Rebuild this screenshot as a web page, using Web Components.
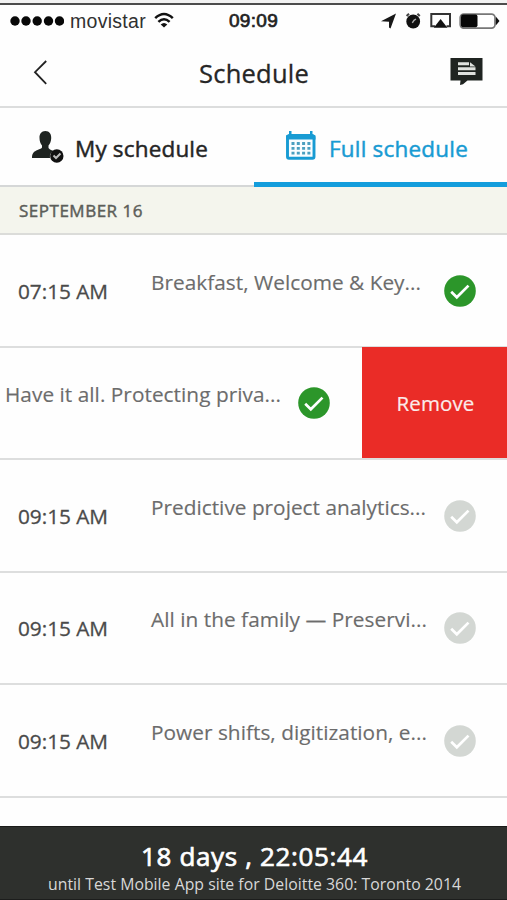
<!DOCTYPE html>
<html lang="en">
<head>
<meta charset="utf-8">
<title>Schedule</title>
<style>
html,body{margin:0;padding:0;background:#fefefe}
body{width:507px;height:900px;overflow:hidden;font-family:"Open Sans","Noto Sans",sans-serif}
</style>
</head>
<body>
<schedule-app></schedule-app>
<script>
function define(name, html, setup) {
  customElements.define(name, class extends HTMLElement {
    connectedCallback() {
      if (this.shadowRoot) return;
      const root = this.attachShadow({ mode: 'open' });
      root.innerHTML = html;
      if (setup) setup(this, root);
    }
  });
}

/* Single-line label whose tracking spreads the text over its "w" pixels. */
define('ui-label', `<style>:host{display:block;white-space:nowrap;flex:none}span{display:inline-block}</style><span><slot></slot></span>`,
  host => { host.style.width = host.getAttribute('w') + 'px'; });

define('status-bar', `<style>
:host{display:flex;box-sizing:border-box;height:38px;border-top:3px solid #f2f2f2;align-items:flex-start;position:relative;font-family:"Liberation Sans",Arial,sans-serif;color:#111}
.rule{position:absolute;left:0;right:0;top:0;height:2px;background:#4c4c4c}
.l{width:229px;display:flex;padding:6px 0 0 10px;box-sizing:border-box}
.l ui-label{font-size:19.5px;line-height:24px;margin-left:6px;color:#303030}
.t{font-size:19px;line-height:24px;-webkit-text-stroke:.7px #222;padding-top:6px;color:#222}
svg{display:block;flex:none}
.r{position:absolute;right:0;top:6px}
</style>
<div class="rule"></div>
<div class="l"><svg width="54" height="24"><g fill="#080808"><circle cx="5" cy="12" r="4.7"/><circle cx="16" cy="12" r="4.7"/><circle cx="27.2" cy="12" r="4.7"/><circle cx="38.5" cy="12" r="4.7"/><circle cx="49.5" cy="12" r="4.7"/></g></svg>
<ui-label w="76">movistar</ui-label>
<svg width="20" height="24" style="margin-left:8px" fill="none" stroke="#111" stroke-width="2.5"><path d="M1.2 9.2Q10 .9 18.8 9.2"/><path d="M4.4 12.9Q10 7.5 15.600 12.9"/><path d="M6.700 15.500Q10 12.500 13.300 15.500L10 18.500Z" fill="#111" stroke="none"/></svg></div>
<ui-label class="t" w="49">09:09</ui-label>
<svg class="r" width="127" height="24">
<path d="M1 12.200L16 4.500L10.500 19.500L9 18.500V12.800Z" fill="#181818"/>
<circle cx="33.200" cy="12.500" r="6.900" fill="#111"/><path d="M26.600 7L29 4.700M39.800 7L37.400 4.700" stroke="#444" stroke-width="2"/><path d="M32.300 13.800L34 11.300L36 10" stroke="#aaa" fill="none" stroke-width="1.400"/>
<path d="M55 17.200H51.300V5H70V17.200H66.500" fill="none" stroke="#333" stroke-width="2"/><path d="M53.800 18.800L60.600 10L67.400 18.800Z" fill="#111"/>
<rect x="80.200" y="5.100" width="34.800" height="14" rx="3.500" fill="#fff" stroke="#777" stroke-width="1.700"/><rect x="81" y="5.600" width="16.500" height="12.600" rx="2" fill="#080808"/><path d="M115.800 7.500L119.500 11.900L115.800 16.400Z" fill="#111"/>
</svg>`);

define('nav-bar', `<style>
:host{display:flex;box-sizing:border-box;height:70px;border-bottom:2px solid #dcdddd;color:#262626}
svg{display:block;flex:none}
.b{margin:22px 0 0 33px}.m{margin:19px 0 0 141px}
ui-label{margin:17px 0 0 151px;font-size:25.500px;line-height:36px;-webkit-text-stroke:.3px #262626}
</style>
<svg class="b" width="15" height="26" fill="none" stroke="#222" stroke-width="1.800"><path d="M13.200 1L2 12.200L13.200 23.800"/></svg>
<ui-label w="110"></ui-label>
<svg class="m" width="34" height="30"><path d="M.5 1H32.500V23.500H17.500L13 27.300L10 28L10.500 23.500H.5Z" fill="#1f2421"/><path d="M8 6.800H19M8 11.800H25.500M8 16.500H25.500" stroke="#dfe2df" stroke-width="3"/><path d="M20 5.300L25.500 9.500H20Z" fill="#dfe2df"/></svg>`,
(host, root) => { root.querySelector('ui-label').textContent = host.getAttribute('heading'); });

define('schedule-tab', `<style>
:host{display:flex;box-sizing:border-box;height:79px;border-bottom:2px solid #d5d7d7;color:#252525}
:host([active]){color:#189bd3;border-bottom:5px solid #139ddc}
.i{width:32px;height:32px;margin:23px 11px 0 32px}
.t{font-size:22.500px;line-height:32px;margin-top:25px;-webkit-text-stroke:.45px currentColor}
</style><div class="i"><slot name="icon"></slot></div><div class="t"><slot></slot></div>`);

define('day-heading', `<style>:host{display:block;box-sizing:border-box;height:48px;border-bottom:2px solid #dbdcd9;background:#f4f5ed;color:#5c5e59;padding:12px 0 0 19px;font-size:17px;line-height:24px;-webkit-text-stroke:.45px #5c5e59}</style><slot></slot>`);

define('check-badge', `<style>:host{display:block;width:32px;height:32px;color:#d3d7d3}:host([on]){color:#2c962a}svg{display:block}</style>
<svg width="32" height="32"><circle cx="16" cy="16" r="15.800" fill="currentColor"/><path d="M7.200 16.800L12.800 22.300L24.500 10.600" fill="none" stroke="#fff" stroke-width="2.700"/></svg>`);

define('schedule-row', `<style>
:host{display:flex;box-sizing:border-box;height:112.600px;border-bottom:2px solid #dddede}
.time{width:151px;padding:41.500px 0 0 18px;box-sizing:border-box;font-size:20.800px;line-height:28px;color:#4a4a4a;-webkit-text-stroke:.3px #4a4a4a;flex:none}
.title{width:293px;padding-top:32.500px;font-size:20.800px;line-height:28px;color:#6c6c6c;-webkit-text-stroke:.15px #6c6c6c;flex:none}
check-badge{margin-top:39.500px;flex:none}
:host([swiped]) .time{display:none}
:host([swiped]) .title{padding-left:5px;width:298px;box-sizing:border-box;flex:none}
.remove{display:none}
:host([swiped]) .remove{display:block;margin:-1px 0 0 31.500px;flex:1;background:#ea2c27;color:#fbeceb;padding:42px 0 0 35px;font-size:20.500px;line-height:28px;-webkit-text-stroke:.2px #fbeceb;box-sizing:border-box}
</style><div class="time"></div><div class="title"><slot></slot></div><check-badge></check-badge><div class="remove"></div>`,
(host, root) => {
  if (host.hasAttribute('time')) root.querySelector('.time').innerHTML = `<ui-label w="90">${host.getAttribute('time')}</ui-label>`;
  if (host.hasAttribute('swiped')) root.querySelector('.remove').innerHTML = '<ui-label w="78">Remove</ui-label>';
  if (host.hasAttribute('on')) root.querySelector('check-badge').setAttribute('on', '');
});

define('countdown-bar', `<style>
:host{display:flex;flex-direction:column;align-items:flex-start;box-sizing:border-box;height:74px;background:#2e302d;border-top:1px solid #1a1b19;border-bottom:1px solid #1c1d1c;color:#fff}
.a{font-size:26px;line-height:34px;-webkit-text-stroke:.7px #fff;margin:12px 0 0 141px}
.b{font-size:15.800px;line-height:22px;color:#d8d8d8;margin:0 0 0 48px}
</style><ui-label class="a" w="227">18 days , 22:05:44</ui-label><ui-label class="b" w="413">until Test Mobile App site for Deloitte 360: Toronto 2014</ui-label>`);

define('schedule-app', `<style>
:host{display:flex;flex-direction:column;width:507px;height:900px;overflow:hidden;background:#fefefe}
:host>*{flex:none}
.tabs{display:grid;grid-template-columns:254px 253px}
.list{height:591px;overflow:hidden}
svg{display:block}
</style>
<status-bar></status-bar>
<nav-bar heading="Schedule"></nav-bar>
<div class="tabs">
<schedule-tab><svg slot="icon" width="32" height="32"><path d="M13.300 0C17.500 0 19.600 3.500 19.200 7.500C19 11 17.800 13 16.500 14.500V17C18 19 20 19 21.500 20C18.500 21.500 17.500 24 18 27H0C0 22 2 20.500 5.500 19C8 18 9.500 17.500 10 16.500V14.500C8.500 12.500 7.500 10 7.500 7C7.300 3 9.500 0 13.300 0Z" fill="#1e2320"/><circle cx="24.800" cy="25" r="6.700" fill="#111"/><path d="M21.500 24.500L24 27L28.500 22.500" fill="none" stroke="#bbb" stroke-width="2"/></svg><ui-label w="133">My schedule</ui-label></schedule-tab>
<schedule-tab active><svg slot="icon" width="32" height="32"><rect x="1.500" y="5" width="26.500" height="22.300" rx="1.500" fill="#fafdff" stroke="#189bd3" stroke-width="2.900"/><path d="M0 4.500L3 3V0H5.500V3H24V0H26.500V3L29.500 4.500V8.500H0Z" fill="#189bd3"/><path d="M5.500 12.500H25M5.500 17.300H25M5.500 22.200H25" stroke="#4b9fc0" stroke-width="2.800" stroke-dasharray="3 2.300"/></svg><ui-label w="139">Full schedule</ui-label></schedule-tab>
</div>
<day-heading><ui-label w="124">SEPTEMBER 16</ui-label></day-heading>
<div class="list">
<schedule-row time="07:15 AM" on><ui-label w="270">Breakfast, Welcome &amp; Key...</ui-label></schedule-row>
<schedule-row swiped on><ui-label w="276">Have it all. Protecting priva...</ui-label></schedule-row>
<schedule-row time="09:15 AM"><ui-label w="275">Predictive project analytics...</ui-label></schedule-row>
<schedule-row time="09:15 AM"><ui-label w="276">All in the family — Preservi...</ui-label></schedule-row>
<schedule-row time="09:15 AM"><ui-label w="276">Power shifts, digitization, e...</ui-label></schedule-row>
</div>
<countdown-bar></countdown-bar>`);

/* Track the labels once every element has its styles. */
(function track(root) {
  root.querySelectorAll('*').forEach(el => {
    if (el.localName === 'ui-label') {
      const s = el.shadowRoot.querySelector('span');
      s.style.letterSpacing = ((+el.getAttribute('w') - s.getBoundingClientRect().width) / el.textContent.length) + 'px';
    }
    if (el.shadowRoot) track(el.shadowRoot);
  });
})(document);
</script>
</body>
</html>
